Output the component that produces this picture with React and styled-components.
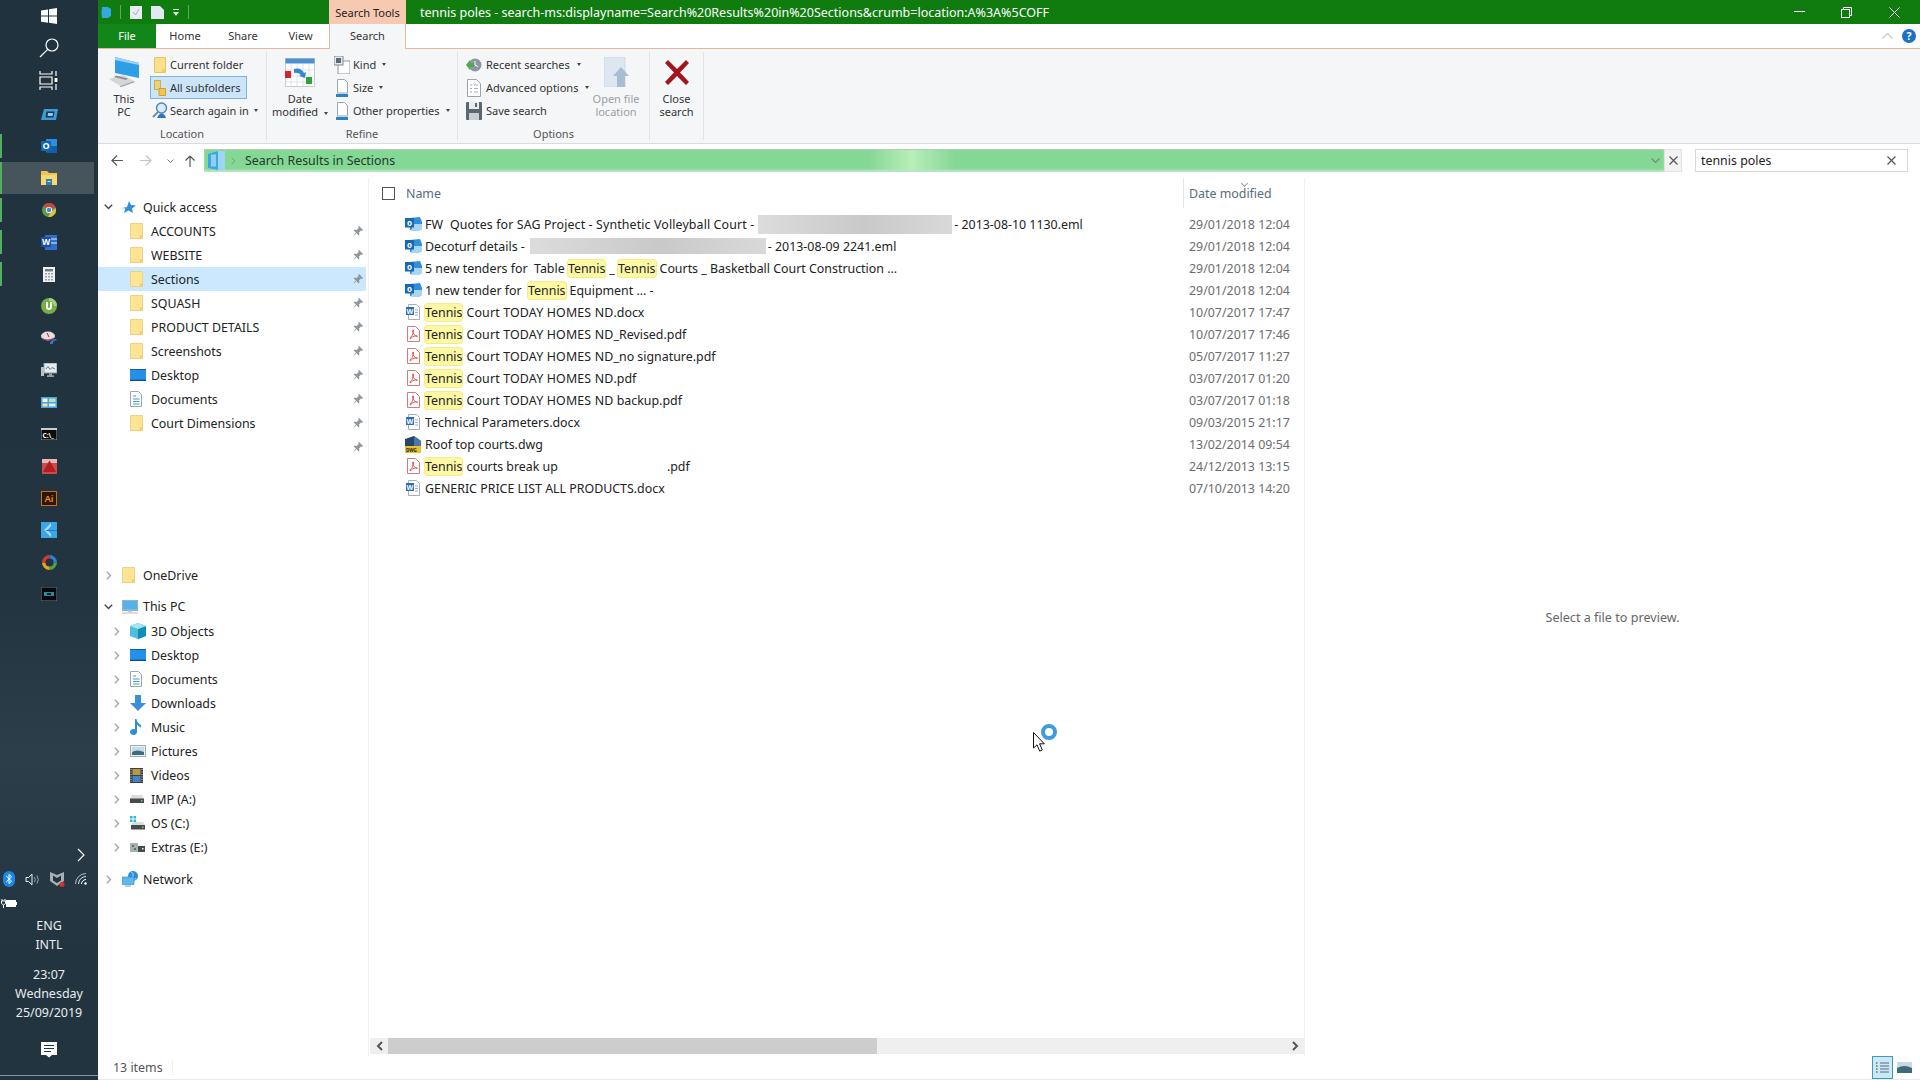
import React from "react";
import styled, { createGlobalStyle } from "styled-components";

const GlobalStyle = createGlobalStyle`
  html, body {
    margin: 0;
    padding: 0;
    background: #fff;
  }
  body {
    font-family: "Noto Sans", "Open Sans", sans-serif;
    font-size: 12.4px;
    color: #222;
    overflow: hidden;
  }
  * {
    box-sizing: border-box;
  }
`;

const glyphs = {
  win: [16, 16, <path fill="#fff" d="M0 2.400 7 1.400V7.600H0zM8 1.300 16 0V7.600H8zM0 8.600H7V14.700L0 13.700zM8 8.600H16V16L8 14.800z" />],
  search: [20, 20, <g fill="none" stroke="#fff" strokeWidth="1.200"><circle cx="13" cy="7" r="6" /><path d="M8.700 11.300 1 19" /></g>],
  taskview: [20, 19, <g fill="none" stroke="#fff" strokeWidth="1.200"><path d="M1 0v3h12V0M1 6h12v7H1zM1 19v-3h12v3" /><path d="M17 0v5M17 13v6" /><rect x="15.600" y="7" width="2.800" height="4" fill="#fff" stroke="none" /></g>],
  ticket: [17, 11, <g><path d="M3 0h14l-2 11H0z" fill="#3d9bd6" /><path d="M5.500 2.500h8l-1 6h-8z" fill="#16394f" /><path d="M7 4h5l-.4 3h-5z" fill="#8fcdf0" /></g>],
  outlook: [16, 16, <g><path d="M5 1h11v13H5z" fill="#2a8fdc" /><path d="M9 8h7v7H5z" fill="#0f5ea8" /><rect x="0" y="3" width="10" height="10" fill="#0f67b5" /><text x="5" y="11.200" fontSize="9" fontWeight="700" fill="#fff" textAnchor="middle">O</text></g>],
  explorer: [16, 16, <g><path d="M0 1h6l2 2h8v12H0z" fill="#f3c34f" /><path d="M0 5h16v10H0z" fill="#fbd76f" /><path d="M5 9h6v6H5z" fill="#2f7eb4" /><path d="M6.500 11h3v1h-3z" fill="#cfe6f5" /></g>],
  chrome: [14, 14, <g><circle cx="7" cy="7" r="7" fill="#5b9b4a" /><path d="M1 3.400A7 7 0 0 1 13.700 5H7z" fill="#c9463d" /><path d="M13.700 5A7 7 0 0 1 6 14l3-5z" fill="#e5bd41" /><circle cx="7" cy="7" r="3.100" fill="#fff" /><circle cx="7" cy="7" r="2.300" fill="#4a83d8" /></g>],
  word: [16, 15, <g><path d="M4 0h12v15H4z" fill="#2f6fc5" /><path d="M9 3h7v2H9zM9 7h7v2H9z" fill="#7fb0e6" /><rect y="2" width="10" height="10" fill="#1d4f9f" /><text x="5" y="10" fontSize="8.500" fontWeight="700" fill="#fff" textAnchor="middle">W</text></g>],
  calc: [12, 15, <g><rect width="12" height="15" fill="#eef0f1" /><rect x="2" y="2" width="8" height="2.400" fill="#6f7a80" /><path d="M2 6h2v1.500H2zM5 6h2v1.500H5zM8 6h2v1.500H8zM2 9h2v1.500H2zM5 9h2v1.500H5zM8 9h2v1.500H8zM2 12h2v1.500H2zM5 12h2v1.500H5zM8 12h2v1.500H8z" fill="#9aa3a8" /></g>],
  torrent: [16, 16, <g><circle cx="8" cy="8" r="8" fill="#76ad45" /><path d="M8 0a8 8 0 0 1 8 8h-3a5 5 0 0 0-5-5z" fill="#a8cf7d" /><path d="M5 4v5a3 3 0 0 0 6 0V4H9v5a1 1 0 0 1-2 0V4z" fill="#fff" /></g>],
  dish: [16, 14, <g><ellipse cx="7" cy="5" rx="7" ry="4.400" fill="#e6dfdf" /><path d="M1 6.500C4 9 9 9 13 6.500L12 8.500C8 10.500 4 10 1 6.500z" fill="#b8394b" /><path d="M6 2 8 6" stroke="#8c2b3a" /><path d="M9 11q3-3 6-3l1 1q-3 1-4 2v2h-3z" fill="#2a7fc4" /></g>],
  monitor: [16, 14, <g><rect x="3" y="0" width="13" height="10" fill="#e5ebee" stroke="#8b9aa3" /><path d="M5 6 7 3.500 9 6.500 11 4.500 14 6" fill="none" stroke="#5f7f95" /><rect x="8" y="10.500" width="3" height="2" fill="#9aa6ad" /><rect x="6" y="12.500" width="7" height="1.200" fill="#c7ced2" /><rect x="0" y="4" width="3" height="9" fill="#b9c1c6" /></g>],
  panel: [16, 11, <g><rect width="16" height="11" fill="#4aa3d8" /><rect x="1.500" y="1.500" width="5" height="3.500" fill="#e9f4fb" /><rect x="8" y="1.500" width="6.500" height="3.500" fill="#bfe0b5" /><rect x="1.500" y="6.500" width="5" height="3" fill="#f1e3a0" /><rect x="8" y="6.500" width="6.500" height="3" fill="#dcecf7" /></g>],
  cmd: [16, 12, <g><rect width="16" height="12" fill="#0c0c0c" stroke="#9aa0a4" /><rect width="16" height="2" fill="#c9cdd0" /><text x="1.600" y="9.600" fontSize="6.500" fontWeight="700" fill="#fff">C:\_</text></g>],
  autocad: [15, 15, <g><rect width="15" height="15" fill="#e7b7b7" /><rect y="4" width="15" height="11" fill="#c94b4b" /><path d="M7.500 1.500 14 13H1z" fill="#b51c22" /></g>],
  ai: [16, 15, <g><rect x=".5" y=".5" width="15" height="14" fill="#2b1703" stroke="#c9701e" /><text x="8" y="11.400" fontSize="9.500" fontWeight="600" fill="#f08a24" textAnchor="middle">Ai</text></g>],
  sketch: [16, 16, <g><rect width="16" height="16" fill="#3aa6e6" /><path d="M10 1 3 8l7 7V12L6.500 8 10 4z" fill="#a6dcf7" /><path d="M5 8h11v1H5z" fill="#1d7fc2" /></g>],
  ring: [15, 15, <g fill="none" strokeWidth="3.400"><path d="M7.500 1.700A5.800 5.800 0 0 1 13.300 7.500" stroke="#2f7fd8" /><path d="M13.300 7.500A5.800 5.800 0 0 1 7.500 13.300" stroke="#4ca63f" /><path d="M7.500 13.300A5.800 5.800 0 0 1 1.700 7.500" stroke="#e9a625" /><path d="M1.700 7.500A5.800 5.800 0 0 1 7.500 1.700" stroke="#d93a2b" /></g>],
  screen: [16, 14, <g><rect width="16" height="14" fill="#05090c" stroke="#7a8287" /><rect x="3" y="5" width="10" height="4" fill="#1f8da0" /><rect x="6" y="6" width="4" height="2" fill="#05090c" /></g>],
  chevronTray: [8, 14, <path d="M1 1 7 7 1 13" fill="none" stroke="#fff" strokeWidth="1.200" />],
  bluetooth: [12, 16, <g><rect width="12" height="16" rx="6" fill="#1b86ea" /><path d="M3.200 5 8.600 10.200 6 12.600V3.400L8.600 5.800 3.200 11" fill="none" stroke="#fff" /></g>],
  speaker: [16, 13, <g fill="none" stroke="#eef1f2"><path d="M1 4.500h2.500L7 1.200v10.600L3.500 8.500H1z" /><path d="M9.500 4q1.500 2.500 0 5M12 2.500q2.500 4 0 8" stroke="#9aa5ab" /></g>],
  mcafee: [15, 15, <g><path d="M0 0 7 3l7-3v9l-7 5-7-5z" fill="#a9b0b4" /><path d="M3 3.500v5L7 11l4-2.500v-5L7 6z" fill="#22343f" /><circle cx="12" cy="12.500" r="2.500" fill="#d8302c" /></g>],
  wifi: [13, 12, <g fill="none" stroke="#b7c0c5"><path d="M.5 11A10.500 10.500 0 0 1 11 .5" /><path d="M3.500 11A7.500 7.500 0 0 1 11 3.500" stroke="#dfe4e6" /><path d="M6.500 11A4.500 4.500 0 0 1 11 6.500" stroke="#fff" /><circle cx="10.500" cy="10.500" r="1.200" fill="#fff" stroke="none" /></g>],
  battery: [16, 9, <g><rect x="5" y="1" width="10" height="7" fill="#fff" /><rect x="15" y="3" width="1" height="3" fill="#fff" /><path d="M1 0v2M4 0v2" stroke="#fff" /><path d="M.5 2h4v2.500l-2 1.500-2-1.500z" fill="none" stroke="#fff" /><path d="M2.500 6v3" stroke="#fff" /></g>],
  chat: [16, 16, <g><path d="M0 0h16v13h-5l-3 2.500L5 13H0z" fill="#fff" /><path d="M3 3.500h10M3 6.500h10M3 9.500h7" stroke="#22343f" /></g>],
  qatCube: [10, 12, <path d="M1 1h6l3 2v7l-3 2H1q-1-5 0-11z" fill="#35a8e0" />],
  qatDoc: [12, 13, <g><path d="M0 0h12v13H0z" fill="#e8edf2" /><path d="M3 6l2.500 3L9 3" stroke="#9db4c6" fill="none" /></g>],
  qatPage: [13, 13, <path d="M0 0h9l4 4v9H0z" fill="#e2e9f1" />],
  qatDrop: [6, 7, <g fill="#d9e8d9"><rect y="0" width="6" height="1" /><path d="M0 3h6L3 7z" /></g>],
  minimize: [11, 2, <rect width="11" height="1" fill="#fff" />],
  restore: [11, 11, <g fill="none" stroke="#fff"><rect x=".5" y="2.500" width="8" height="8" /><path d="M2.500 2.500V.5h8v8h-2" /></g>],
  close: [11, 11, <path d="M.5.5l10 10M10.500.5l-10 10" stroke="#fff" fill="none" />],
  collapse: [11, 6, <path d="M.5 5.500 5.500.5l5 5" fill="none" stroke="#c9c9c9" strokeWidth="1.300" />],
  help: [14, 14, <g><circle cx="7" cy="7" r="7" fill="#1a72c4" /><text x="7" y="11" fontSize="10.500" fontWeight="700" fill="#fff" textAnchor="middle">?</text></g>],
  bigPc: [30, 30, <g><path d="M6 0l24 6v15L6 16z" fill="#2e9fe6" /><path d="M6 0l24 6v2L6 3z" fill="#9ad3f6" /><path d="M0 22l14-4 11 6-14 5z" fill="#d4d6d8" /><path d="M11 29l14-5v1.500L11 30.500z" fill="#a4a7aa" /><path d="M5 20l12 3 2-1.500-12-3z" fill="#8e9194" /></g>],
  smallFolder: [12, 16, <g><path d="M.5.5h11v15H.5z" fill="#ffe08a" stroke="#e4c565" /><path d="M8 12h3.500v3.500H8z" fill="#f1cd62" /></g>],
  subFolders: [12, 16, <g><path d="M.5.5h6v9h-6z" fill="#e9d37a" stroke="#c9ad4e" /><path d="M5 8.500h6.500v7H5z" fill="#f1c64a" stroke="#cda132" /></g>],
  searchAgain: [16, 17, <g><circle cx="9.500" cy="6" r="5" fill="#d9ebf8" stroke="#4a87c2" strokeWidth="1.400" /><path d="M6 10 1 15" stroke="#7a8a96" strokeWidth="2" /><path d="M5 16q2-5 5-4.500t4 4.500z" fill="#2b78c4" /></g>],
  calendar: [30, 29, <g><rect x=".5" y=".5" width="29" height="28" fill="#fff" stroke="#c6ccd2" /><rect x=".5" y=".5" width="29" height="5" fill="#4d90cf" /><path d="M6 6v22M12 6v22M18 6v22M24 6v22M1 12h28M1 18h28M1 24h28" stroke="#dfe4e8" /><rect x="0" y="13" width="6" height="7" fill="#d6242b" /><rect x="21" y="19" width="6" height="7" fill="#2ca33a" /><path d="M9 11q7-2 10 4l2-1-1 6-6-2 2-1q-3-3-7-2z" fill="#3188cf" /></g>],
  kind: [16, 18, <g><rect x="4" y="5" width="12" height="13" fill="#fff" stroke="#8c98a3" /><rect x="0" y="0" width="9" height="9" fill="#e6eaee" stroke="#7f8a94" /><rect x="2" y="2" width="5" height="5" fill="#5b6a76" /></g>],
  size: [12, 18, <g><path d="M1.500.5h7l3 3V14h-10z" fill="#fff" stroke="#9aa6b0" /><rect x="0" y="15" width="12" height="3" fill="#2d82c4" /></g>],
  recent: [16, 14, <g><circle cx="9" cy="7" r="6.500" fill="#8f979c" /><path d="M9 3v4l3 1.500" stroke="#fff" fill="none" /><path d="M0 7l4-5v3h4v4H4v3z" fill="#4eaa4f" /></g>],
  advanced: [14, 18, <g><path d="M.5.5h9l4 4v13H.5z" fill="#fff" stroke="#9aa3aa" /><path d="M3 6h2M7 6h4M3 9.500h2M7 9.500h4M3 13h2M7 13h4" stroke="#a5adb3" /></g>],
  save: [16, 18, <g><rect width="16" height="18" rx="1" fill="#5a6670" /><rect x="3" y="0" width="10" height="7" fill="#e8ecef" /><rect x="3" y="11" width="10" height="7" fill="#c9ced2" /><rect x="9" y="1" width="2" height="4" fill="#5a6670" /></g>],
  openFile: [25, 30, <g><rect width="21" height="30" fill="#dde7f2" stroke="#cbd8e6" /><path d="M17 10l8 9h-4v11h-8V19H9z" fill="#a9bdd2" /></g>],
  closeX: [24, 25, <path d="M3 0l9 9 9-9 3 3-9 9.500 9 9.500-3 3-9-9-9 9-3-3 9-9.500L0 3z" fill="#a3141c" />],
  back: [12, 11, <path d="M6 .5 1 5.500l5 5M1 5.500h11" fill="none" stroke="#555" strokeWidth="1.200" />],
  forward: [12, 11, <path d="M6 .5l5 5-5 5M11 5.500H0" fill="none" stroke="#c4c4c4" strokeWidth="1.200" />],
  recentDrop: [7, 4, <path d="M.5.5 3.500 3.500 6.500.5" fill="none" stroke="#777" />],
  up: [10, 12, <path d="M5 12V1M.5 5.500 5 1l4.500 4.500" fill="none" stroke="#555" strokeWidth="1.200" />],
  crumb: [17, 19, <g><path d="M0 3l10-3v19L0 17z" fill="#3aa7e6" /><path d="M10 0h7v19h-7z" fill="#9fd4f4" /><path d="M3 3.500h5v12H3z" fill="#cbe9fa" opacity=".6" /></g>],
  crumbArrow: [5, 8, <path d="M.5.5 4 4 .5 7.500" fill="none" stroke="#7f9d87" />],
  dropDown: [9, 5, <path d="M.5.5 4.500 4.500 8.500.5" fill="none" stroke="#6f8f76" strokeWidth="1.200" />],
  clearX: [9, 9, <path d="M.5.5l8 8M8.500.5l-8 8" stroke="#555" strokeWidth="1.200" fill="none" />],
  treeOpen: [9, 6, <path d="M.8.8 4.500 4.500 8.200.8" fill="none" stroke="#444" strokeWidth="1.400" />],
  treeClosed: [6, 9, <path d="M.8.8 4.500 4.500.8 8.200" fill="none" stroke="#a6a6a6" strokeWidth="1.400" />],
  star: [14, 12, <path d="M7 0l2 4 5 .5-4 3 1 4.500-4.500-2.500L2 12l1.500-4.500L0 7l5-1z" fill="#2c8fe0" />],
  folder: [13, 16, <g><path d="M.5.5h12v15H.5z" fill="#ffe493" stroke="#ecd384" /><path d="M10 12.500h2.500v3H10z" fill="#efcd68" /></g>],
  desktop: [16, 12, <g><rect width="16" height="12" fill="#2590ea" /><rect width="16" height="1" fill="#0f5fa8" /><rect y="10.700" width="16" height="1.300" fill="#0f4d8c" /></g>],
  documents: [12, 16, <g><path d="M.5.5h8l3 3v12H.5z" fill="#fff" stroke="#9ea6ad" /><path d="M3 5h3M3 8h6.500M3 10.500h6.500M3 13h6.500" stroke="#3f9bd0" /></g>],
  pin: [10, 10, <path d="M6 0l4 4-1 1-1-.5-2 2 .5 2-1 1L3.500 7 1 9.500.5 9 3 6.500.7 4.500l1-1 2 .5 2-2L5 1z" fill="#8f979c" />],
  pc: [16, 14, <g><rect width="16" height="10.500" fill="#8ccbf2" stroke="#6b8ca3" strokeWidth=".6" /><rect x="1" y="1" width="14" height="8.500" fill="#58b0e8" /><rect x="0" y="12.500" width="16" height="1" fill="#b5bcc2" /><rect x="6" y="10.500" width="4" height="2" fill="#c7ccd0" /></g>],
  cube: [16, 16, <g><path d="M8 0l8 3v10l-8 3-8-3V3z" fill="#4dbde0" /><path d="M8 6v10l8-3V3z" fill="#0e8fb5" /><path d="M8 0l8 3-8 3-8-3z" fill="#a6e2f0" /></g>],
  downloads: [16, 16, <path d="M5 0h6v8h5l-8 8-8-8h5z" fill="#3b8fd9" />],
  music: [11, 16, <path d="M5 0h1.500q.5 4 4.500 6v2.500Q8 7 7 5.500V13a3.500 3 0 1 1-2-2.700z" fill="#2a8fd6" />],
  pictures: [16, 12, <g><rect x=".5" y=".5" width="15" height="11" fill="#eef2f5" stroke="#a2abb2" /><rect x="2" y="2" width="12" height="8" fill="#c4dbe9" /><path d="M2 7q5-3 12 0v3H2z" fill="#3e6e7c" /></g>],
  videos: [13, 15, <g><rect width="13" height="15" fill="#3d3f42" /><rect x="2.500" y="1" width="8" height="6" fill="#b59a43" /><rect x="2.500" y="8" width="8" height="6" fill="#3f86c2" /><path d="M1 1v13M12 1v13" stroke="#d8d8d8" strokeDasharray="1 1.500" /></g>],
  drive: [14, 8, <g><path d="M2 0h10l2 4H0z" fill="#dadcdd" /><rect y="3.500" width="14" height="4.500" fill="#474b4e" /><rect x="11" y="5" width="1.500" height="1.500" fill="#5be05b" /></g>],
  driveOs: [15, 14, <g><path d="M0 0h2.500v2.500H0zM3.500 0H6v2.500H3.500zM0 3.500h2.500V6H0zM3.500 3.500H6V6H3.500z" fill="#31b3d8" /><path d="M3 6h10l2 3.500H1z" fill="#dadcdd" /><rect x="1" y="9" width="14" height="4.500" fill="#474b4e" /><rect x="12" y="10.500" width="1.500" height="1.500" fill="#5be05b" /></g>],
  driveExtra: [15, 9, <g><path d="M0 0h8v9H0z" fill="#a9b2a8" /><path d="M2 2h2v2H2zM4 5h2v2H4z" fill="#4d7d5a" /><rect x="8" y="3" width="7" height="6" fill="#474b4e" /><rect x="12" y="5" width="1.500" height="1.500" fill="#e8e8e8" /></g>],
  network: [16, 16, <g><circle cx="11" cy="5" r="5" fill="#2e8fd6" /><path d="M9 1q3 1 2 4t3 3" stroke="#a8d8f2" fill="none" /><rect x="0" y="6" width="12" height="7.500" fill="#5db8ee" stroke="#2e86c4" strokeWidth=".6" /><rect x="3" y="14.500" width="6" height="1" fill="#7aa3bf" /></g>],
  fileOutlook: [17, 15, <g><path d="M5 1l10-1 2 5v7l-4 2-8-1z" fill="#2e90dc" /><path d="M8 7h9v5l-4 2H6z" fill="#a9d5f2" /><rect y="1" width="9" height="9.500" fill="#1667b4" /><text x="4.500" y="8.800" fontSize="8" fontWeight="700" fill="#fff" textAnchor="middle">o</text></g>],
  fileWord: [14, 16, <g><path d="M2.500.5h8l3 3v12h-11z" fill="#fff" stroke="#a5aeb8" /><path d="M9 6h3M9 8.500h3M9 11h3" stroke="#8db4dc" /><rect y="3" width="8" height="8" fill="#2b6bc0" /><text x="4" y="9.500" fontSize="7" fontWeight="700" fill="#fff" textAnchor="middle">W</text></g>],
  filePdf: [13, 16, <g><path d="M.5.5h8l4 4v11H.5z" fill="#fff" stroke="#d87878" /><path d="M3 12q3-2 3.500-7 .2-1.500-.7-1-.8 1 1 4 2 2.500 3.500 2.500 1-.5-1-.8-4 .3-6 3.300z" fill="none" stroke="#d13a3a" strokeWidth=".8" /></g>],
  fileDwg: [16, 17, <g><path d="M0 10 0 3 9 0l7 5v5z" fill="#26456b" /><path d="M9 0l7 5v5H9z" fill="#4878a8" /><rect y="10" width="16" height="7" fill="#e9c22e" /><text x="1" y="15.600" fontSize="4.500" fontWeight="700" fill="#222">DWG</text></g>],
  pointer: [12, 20, <path d="M.5.5V16l3.500-3.200 2.700 6.300 2.600-1.100-2.700-6.200h4.700z" fill="#fff" stroke="#111" />],
  listView: [15, 15, <g stroke="#5a6a74" fill="none"><path d="M5 3h9M5 6h9M5 9h9M5 12h9" /><path d="M1 3h1.500M1 6h1.500M1 9h1.500M1 12h1.500" stroke="#333" /></g>],
  largeView: [15, 11, <g><rect width="15" height="11" fill="#c7d9e6" /><path d="M0 6q7-4 15 0v5H0z" fill="#3d6b78" /></g>],
  scrollLeft: [7, 10, <path d="M6 1 2 5l4 4" fill="none" stroke="#555" strokeWidth="2" />],
  scrollRight: [7, 10, <path d="M1 1l4 4-4 4" fill="none" stroke="#555" strokeWidth="2" />],
};

const SvgIcon = styled.svg`
  display: block;
  flex: none;
`;

function Icon({ name }) {
  const [w, h, art] = glyphs[name];
  return (
    <SvgIcon width={w} height={h} viewBox={`0 0 ${w} ${h}`}>
      {art}
    </SvgIcon>
  );
}

const Page = styled.div`
  display: flex;
  width: 1920px;
  height: 1080px;
  overflow: hidden;
  position: relative;
`;

/* taskbar */
const Taskbar = styled.aside`
  width: 98px;
  flex: none;
  display: flex;
  flex-direction: column;
  color: #e8ecee;
  background: linear-gradient(#20323d 0%, #22343f 55%, #2c3e49 70%, #22343f 88%);
`;

const TaskTop = styled.div`
  display: flex;
  flex-direction: column;
  margin-bottom: 2px;
`;

const TaskSlot = styled.div`
  position: relative;
  height: 32px;
  margin-right: 4px;
  display: flex;
  align-items: center;
  justify-content: center;
  padding-left: 4px;
  background: ${(p) => (p.$active ? "#46545c" : "transparent")};

  &::before {
    content: "";
    position: absolute;
    left: 0;
    top: ${(p) => (p.$active ? "0" : "4px")};
    bottom: ${(p) => (p.$active ? "0" : "4px")};
    width: 2px;
    background: ${(p) => (p.$running ? "#55ad5f" : "transparent")};
  }
`;

const Tray = styled.div`
  margin-top: auto;
  display: flex;
  flex-direction: column;
  font-size: 12.500px;
  line-height: 19px;
  text-align: center;
`;

const TrayChevron = styled.div`
  display: flex;
  justify-content: flex-end;
  padding-right: 13px;
  height: 24px;
  align-items: center;
`;

const TrayIcons = styled.div`
  display: flex;
  align-items: center;
  justify-content: space-between;
  height: 24px;
  padding: 0 10px 0 3px;
`;

const TrayBattery = styled.div`
  height: 24px;
  padding-left: 1px;
  display: flex;
  align-items: center;
`;

const TrayLines = styled.div`
  margin-top: ${(p) => p.$top}px;
`;

const ActionCenter = styled.div`
  height: 28px;
  margin-top: 14px;
  display: flex;
  justify-content: center;
  align-items: center;
`;

const TaskFoot = styled.div`
  height: 5px;
  margin-top: 11px;
  border-top: 1px solid #8b969c;
`;

/* window */
const Win = styled.main`
  flex: 1;
  min-width: 0;
  display: flex;
  flex-direction: column;
`;

const TitleBar = styled.header`
  height: 24px;
  display: flex;
  align-items: center;
  background: #107c10;
  color: #fff;
`;

const Qat = styled.div`
  width: 231px;
  flex: none;
  display: flex;
  align-items: center;
  gap: 9px;
  padding-left: 3px;
`;

const QatBar = styled.span`
  width: 1px;
  height: 14px;
  background: #5fa65f;
`;

const ContextTab = styled.div`
  width: 77px;
  height: 24px;
  flex: none;
  background: #f8c9b1;
  color: #222;
  font-size: 11px;
  display: flex;
  align-items: center;
  justify-content: center;
`;

const TitleText = styled.div`
  padding-left: 14px;
  font-size: 12.500px;
  white-space: nowrap;
`;

const WinButtons = styled.div`
  margin-left: auto;
  padding-right: 2px;
  display: flex;
`;

const WinButton = styled.div`
  width: 47.500px;
  height: 24px;
  display: flex;
  align-items: center;
  justify-content: center;
`;

const TabRow = styled.nav`
  height: 25px;
  display: flex;
  align-items: stretch;
  background: #fff;
  border-bottom: 1px solid #e8b49a;
`;

const Tab = styled.div`
  width: ${(p) => p.$w}px;
  display: flex;
  align-items: center;
  justify-content: center;
  padding-bottom: 1px;
  font-size: 11px;
  color: ${(p) => (p.$file ? "#fff" : "#333")};
  background: ${(p) => (p.$file ? "#13861a" : "transparent")};
`;

const ActiveTab = styled(Tab)`
  height: 25px;
  padding-bottom: 2px;
  background: #f5f6f7;
  border-left: 1px solid #e8b49a;
  border-right: 1px solid #e8b49a;
`;

const TabEnd = styled.div`
  margin-left: auto;
  display: flex;
  align-items: center;
  gap: 9px;
  padding-right: 4px;
`;

const Ribbon = styled.section`
  height: 95px;
  display: flex;
  background: #f5f6f7;
  border-bottom: 1px solid #dadbdc;
  font-size: 11px;
  color: #333;
`;

const Group = styled.div`
  width: ${(p) => p.$w}px;
  flex: none;
  margin: 3px 0;
  border-right: 1px solid #e2e3e4;
  display: flex;
  flex-direction: column;
`;

const GroupBody = styled.div`
  height: 73px;
  flex: none;
  display: flex;
  padding-top: 1px;
`;

const GroupLabel = styled.div`
  flex: none;
  text-align: center;
  color: #555;
  line-height: 18px;
  height: 18px;
`;

const BigButton = styled.div`
  width: ${(p) => p.$w}px;
  flex: none;
  display: flex;
  flex-direction: column;
  align-items: center;
  text-align: center;
  line-height: 13px;
  color: ${(p) => (p.$disabled ? "#9aa0a6" : "#333")};
`;

const BigIcon = styled.div`
  height: 38px;
  margin-bottom: 1px;
  display: flex;
  align-items: center;
  justify-content: center;
`;

const SmallCol = styled.div`
  width: ${(p) => p.$w}px;
  flex: none;
  display: flex;
  flex-direction: column;
  padding-left: ${(p) => p.$pad || 0}px;
`;

const SmallItem = styled.div`
  height: 23px;
  width: fit-content;
  display: flex;
  align-items: center;
  gap: ${(p) => p.$gap || 3}px;
  padding: 0 6px 0 ${(p) => p.$left || 0}px;
  white-space: nowrap;
  border: 1px solid ${(p) => (p.$on ? "#7db3dc" : "transparent")};
  background: ${(p) => (p.$on ? "#cce4f7" : "transparent")};
`;

const SmallIconBox = styled.span`
  width: 16px;
  display: flex;
  justify-content: center;
  flex: none;
`;

const Caret = styled.span`
  width: 0;
  height: 0;
  margin-left: 3px;
  border-left: 2.500px solid transparent;
  border-right: 2.500px solid transparent;
  border-top: 3px solid #444;
`;

const InlineCaret = styled(Caret)`
  display: inline-block;
  vertical-align: middle;
`;

/* address */
const AddressRow = styled.div`
  height: 34px;
  padding-top: 5px;
  display: flex;
`;

const NavArrows = styled.div`
  width: 106px;
  height: 23px;
  flex: none;
  display: flex;
  align-items: center;
  padding-left: 13px;
`;

const ArrowBox = styled.span`
  width: ${(p) => p.$w}px;
  margin-left: ${(p) => p.$ml || 0}px;
  display: flex;
  justify-content: center;
`;

const AddressBar = styled.div`
  width: 1460px;
  height: 23px;
  flex: none;
  display: flex;
  align-items: center;
  padding: 0 4px 0 4px;
  gap: 6px;
  color: #1f3a26;
  box-shadow: inset 0 1px 0 #b4ccb9, inset 0 -2px 2px #b9e6c4;
  background: linear-gradient(
    90deg,
    #85d796 0%,
    #85d796 45.500%,
    #9fe3a9 47%,
    #b8efb8 48.500%,
    #a6e6ae 49.500%,
    #85d796 51.500%,
    #85d796 100%
  );
`;

const AddressText = styled.span`
  margin-left: 3px;
`;

const AddressClear = styled.div`
  width: 18px;
  height: 23px;
  flex: none;
  display: flex;
  align-items: center;
  justify-content: center;
  background: #f2f2f2;
  border: 1px solid #e2e2e2;
`;

const SearchBox = styled.div`
  width: 213px;
  height: 23px;
  flex: none;
  margin-left: 13px;
  display: flex;
  align-items: center;
  justify-content: space-between;
  padding: 0 11px 0 5px;
  border: 1px solid #d9d9d9;
  color: #222;
`;

/* main panes */
const Panes = styled.div`
  flex: 1;
  min-height: 0;
  display: flex;
`;

const NavPane = styled.div`
  width: 271px;
  flex: none;
  border-right: 1px solid #f1f1f1;
  padding-top: 17px;
  display: flex;
  flex-direction: column;
`;

const NavGroup = styled.div`
  width: 268px;
  margin-top: ${(p) => p.$top || 0}px;
`;

const NavRow = styled.div`
  height: ${(p) => p.$h || 24}px;
  display: flex;
  align-items: center;
  padding-left: ${(p) => (p.$depth || 0) * 8}px;
  padding-right: 2px;
  background: ${(p) => (p.$selected ? "#cce8ff" : "transparent")};
`;

const Twisty = styled.span`
  width: 24px;
  flex: none;
  display: flex;
  justify-content: center;
  padding-right: 3px;
`;

const NavIcon = styled.span`
  width: 21px;
  height: 16px;
  flex: none;
  display: flex;
  align-items: center;
`;

const PinBox = styled.span`
  margin-left: auto;
  width: 12px;
  display: flex;
  justify-content: center;
`;

const FilePane = styled.div`
  width: 936px;
  flex: none;
  border-right: 1px solid #f1f1f1;
  display: flex;
  flex-direction: column;
  padding-left: 1px;
`;

const HeaderRow = styled.div`
  height: 30px;
  flex: none;
  display: grid;
  grid-template-columns: 813px 1fr;
  color: #5b6b7d;
`;

const NameHead = styled.div`
  display: flex;
  align-items: center;
  gap: 11px;
  padding-left: 12px;
`;

const CheckBox = styled.span`
  width: 13px;
  height: 13px;
  border: 1px solid #555;
`;

const DateHead = styled.div`
  position: relative;
  border-left: 1px solid #e5e5e5;
  padding-left: 5px;
  display: flex;
  align-items: center;
`;

const SortMark = styled.span`
  position: absolute;
  left: 58px;
  top: 3px;
  width: 5px;
  height: 5px;
  border-right: 1px solid #9a9a9a;
  border-bottom: 1px solid #9a9a9a;
  transform: rotate(45deg);
`;

const FileList = styled.div`
  flex: 1;
  min-height: 0;
  padding-top: 5px;
`;

const FileRow = styled.div`
  height: 22px;
  display: grid;
  grid-template-columns: 819px 1fr;
  align-items: center;
`;

const FileName = styled.div`
  display: flex;
  align-items: center;
  padding-left: 34px;
  white-space: pre;
`;

const FileIconBox = styled.span`
  width: 21px;
  flex: none;
  display: flex;
  justify-content: center;
  padding-right: 3px;
`;

const Hit = styled.span`
  background: #fdf8a4;
  border-radius: 3px;
  box-shadow: 0 0 0 1px #f5ec86;
  margin-right: 4px;
`;

const Loose = styled.span`
  letter-spacing: ${(p) => p.$s}px;
`;

const Blur = styled.span`
  display: inline-block;
  width: ${(p) => p.$w}px;
  height: ${(p) => p.$h}px;
  margin: 0 ${(p) => p.$after}px 0 ${(p) => p.$before}px;
  background: linear-gradient(90deg, #dcdcdc, #c9c9c9 55%, #d9d9d9);
`;

const Gap = styled.span`
  display: inline-block;
  width: ${(p) => p.$w}px;
`;

const FileDate = styled.div`
  color: #6d6d6d;
`;

const HScroll = styled.div`
  height: 16px;
  flex: none;
  margin-bottom: 2px;
  display: flex;
  align-items: center;
  background: #efefef;
`;

const ScrollEnd = styled.span`
  width: 18px;
  flex: none;
  display: flex;
  justify-content: center;
`;

const ScrollThumb = styled.span`
  width: 489px;
  height: 16px;
  background: #cdcdcd;
`;

const Fill = styled.span`
  flex: 1;
`;

const Preview = styled.div`
  flex: 1;
  display: flex;
  align-items: center;
  justify-content: center;
  color: #666;
  font-size: 12.600px;
`;

const StatusBar = styled.footer`
  height: 24px;
  flex: none;
  display: flex;
  align-items: stretch;
  border-bottom: 1px solid #e9e9e9;
  color: #555;
`;

const ItemCount = styled.div`
  width: 74px;
  padding-left: 15px;
  display: flex;
  align-items: center;
  white-space: nowrap;
`;

const StatusSep = styled.span`
  width: 1px;
  margin: 4px 0;
  background: #f1f1f1;
`;

const ViewButtons = styled.div`
  margin-left: auto;
  display: flex;
  align-items: center;
  gap: 4px;
  padding-right: 8px;
`;

const ViewButton = styled.span`
  width: 21px;
  height: 23px;
  display: flex;
  align-items: center;
  justify-content: center;
  background: #cbe8f6;
  border: 1px solid #3e9ab8;
`;

const Busy = styled.div`
  position: absolute;
  left: 1033px;
  top: 724px;
  width: 26px;
  height: 28px;
`;

const BusyPointer = styled.div`
  position: absolute;
  left: 0;
  top: 8px;
`;

const BusyRing = styled.div`
  position: absolute;
  left: 8px;
  top: 0;
  width: 16px;
  height: 16px;
  border-radius: 50%;
  border: 4px solid #3d9be0;
  background: #fff;
`;

const taskApps = [
  { icon: "ticket" },
  { icon: "outlook", running: true },
  { icon: "explorer", running: true, active: true },
  { icon: "chrome", running: true },
  { icon: "word", running: true },
  { icon: "calc", running: true },
  { icon: "torrent" },
  { icon: "dish" },
  { icon: "monitor" },
  { icon: "panel" },
  { icon: "cmd" },
  { icon: "autocad" },
  { icon: "ai" },
  { icon: "sketch" },
  { icon: "ring" },
  { icon: "screen" },
];

const quickAccess = [
  ["folder", "ACCOUNTS"],
  ["folder", "WEBSITE"],
  ["folder", "Sections", true],
  ["folder", "SQUASH"],
  ["folder", "PRODUCT DETAILS"],
  ["folder", "Screenshots"],
  ["desktop", "Desktop"],
  ["documents", "Documents"],
  ["folder", "Court Dimensions"],
  [null, ""],
];

const thisPc = [
  ["cube", "3D Objects"],
  ["desktop", "Desktop"],
  ["documents", "Documents"],
  ["downloads", "Downloads"],
  ["music", "Music"],
  ["pictures", "Pictures"],
  ["videos", "Videos"],
  ["drive", "IMP (A:)"],
  ["driveOs", "OS (C:)"],
  ["driveExtra", "Extras (E:)"],
];

const T = () => <Hit>Tennis</Hit>;
const Court = () => <Loose $s={0.16}>Court TODAY HOMES ND</Loose>;

const files = [
  {
    icon: "fileOutlook",
    date: "29/01/2018 12:04",
    name: (
      <>
        <Loose $s={0.12}>FW  Quotes for SAG Project - Synthetic Volleyball Court -</Loose>
        <Blur $w={194} $h={19} $before={4} $after={2} />- 2013-08-10 1130.eml
      </>
    ),
  },
  {
    icon: "fileOutlook",
    date: "29/01/2018 12:04",
    name: (
      <>
        Decoturf details -
        <Blur $w={236} $h={16} $before={5} $after={2} />- 2013-08-09 2241.eml
      </>
    ),
  },
  {
    icon: "fileOutlook",
    date: "29/01/2018 12:04",
    name: (
      <>
        5 new tenders for  Table <T />_ <T />Courts _ Basketball Court Construction ...
      </>
    ),
  },
  {
    icon: "fileOutlook",
    date: "29/01/2018 12:04",
    name: (
      <>
        1 new tender for  <T />Equipment ... -
      </>
    ),
  },
  { icon: "fileWord", date: "10/07/2017 17:47", name: <><T /><Court />.docx</> },
  { icon: "filePdf", date: "10/07/2017 17:46", name: <><T /><Court />_Revised.pdf</> },
  { icon: "filePdf", date: "05/07/2017 11:27", name: <><T /><Court />_no signature.pdf</> },
  { icon: "filePdf", date: "03/07/2017 01:20", name: <><T /><Court />.pdf</> },
  { icon: "filePdf", date: "03/07/2017 01:18", name: <><T /><Court /> backup.pdf</> },
  { icon: "fileWord", date: "09/03/2015 21:17", name: "Technical Parameters.docx" },
  { icon: "fileDwg", date: "13/02/2014 09:54", name: "Roof top courts.dwg" },
  {
    icon: "filePdf",
    date: "24/12/2013 13:15",
    name: (
      <>
        <T />courts break up<Gap $w={109} />.pdf
      </>
    ),
  },
  { icon: "fileWord", date: "07/10/2013 14:20", name: "GENERIC PRICE LIST ALL PRODUCTS.docx" },
];

function Small({ icon, label, caret, on, left, gap }) {
  return (
    <SmallItem $on={on} $left={left} $gap={gap}>
      <SmallIconBox>
        <Icon name={icon} />
      </SmallIconBox>
      {label}
      {caret && <Caret />}
    </SmallItem>
  );
}

function TreeRow({ icon, label, depth, open, closed, pin, selected, h }) {
  return (
    <NavRow $depth={depth} $selected={selected} $h={h}>
      <Twisty>
        {open && <Icon name="treeOpen" />}
        {closed && <Icon name="treeClosed" />}
      </Twisty>
      <NavIcon>{icon && <Icon name={icon} />}</NavIcon>
      {label}
      {pin && (
        <PinBox>
          <Icon name="pin" />
        </PinBox>
      )}
    </NavRow>
  );
}

export default function App() {
  return (
    <Page>
      <GlobalStyle />
      <Taskbar>
        <TaskTop>
          <TaskSlot>
            <Icon name="win" />
          </TaskSlot>
          <TaskSlot>
            <Icon name="search" />
          </TaskSlot>
          <TaskSlot>
            <Icon name="taskview" />
          </TaskSlot>
        </TaskTop>
        {taskApps.map((app) => (
          <TaskSlot key={app.icon} $running={app.running} $active={app.active}>
            <Icon name={app.icon} />
          </TaskSlot>
        ))}
        <Tray>
          <TrayChevron>
            <Icon name="chevronTray" />
          </TrayChevron>
          <TrayIcons>
            <Icon name="bluetooth" />
            <Icon name="speaker" />
            <Icon name="mcafee" />
            <Icon name="wifi" />
          </TrayIcons>
          <TrayBattery>
            <Icon name="battery" />
          </TrayBattery>
          <TrayLines $top={1}>
            <div>ENG</div>
            <div>INTL</div>
          </TrayLines>
          <TrayLines $top={11}>
            <div>23:07</div>
            <div>Wednesday</div>
            <div>25/09/2019</div>
          </TrayLines>
          <ActionCenter>
            <Icon name="chat" />
          </ActionCenter>
          <TaskFoot />
        </Tray>
      </Taskbar>

      <Win>
        <TitleBar>
          <Qat>
            <Icon name="qatCube" />
            <QatBar />
            <Icon name="qatDoc" />
            <Icon name="qatPage" />
            <Icon name="qatDrop" />
            <QatBar />
          </Qat>
          <ContextTab>Search Tools</ContextTab>
          <TitleText>
            tennis poles - search-ms:displayname=Search%20Results%20in%20Sections&amp;crumb=location:A%3A%5COFF
          </TitleText>
          <WinButtons>
            <WinButton>
              <Icon name="minimize" />
            </WinButton>
            <WinButton>
              <Icon name="restore" />
            </WinButton>
            <WinButton>
              <Icon name="close" />
            </WinButton>
          </WinButtons>
        </TitleBar>

        <TabRow>
          <Tab $w={58} $file>
            File
          </Tab>
          <Tab $w={58}>Home</Tab>
          <Tab $w={58}>Share</Tab>
          <Tab $w={57}>View</Tab>
          <ActiveTab $w={77}>Search</ActiveTab>
          <TabEnd>
            <Icon name="collapse" />
            <Icon name="help" />
          </TabEnd>
        </TabRow>

        <Ribbon>
          <Group $w={169}>
            <GroupBody>
              <BigButton $w={52}>
                <BigIcon>
                  <Icon name="bigPc" />
                </BigIcon>
                This
                <br />
                PC
              </BigButton>
              <SmallCol $w={116}>
                <Small icon="smallFolder" label="Current folder" left={1} gap={2} />
                <Small icon="subFolders" label="All subfolders" on left={1} gap={2} />
                <Small icon="searchAgain" label="Search again in" caret left={1} gap={2} />
              </SmallCol>
            </GroupBody>
            <GroupLabel>Location</GroupLabel>
          </Group>

          <Group $w={191}>
            <GroupBody>
              <BigButton $w={66}>
                <BigIcon>
                  <Icon name="calendar" />
                </BigIcon>
                Date
                <br />
                <span>
                  modified <InlineCaret />
                </span>
              </BigButton>
              <SmallCol $w={124}>
                <Small icon="kind" label="Kind" caret gap={3} />
                <Small icon="size" label="Size" caret gap={3} />
                <Small icon="size" label="Other properties" caret gap={3} />
              </SmallCol>
            </GroupBody>
            <GroupLabel>Refine</GroupLabel>
          </Group>

          <Group $w={192}>
            <GroupBody>
              <SmallCol $w={127} $pad={7}>
                <Small icon="recent" label="Recent searches" caret gap={4} />
                <Small icon="advanced" label="Advanced options" caret gap={4} />
                <Small icon="save" label="Save search" gap={4} />
              </SmallCol>
              <BigButton $w={62} $disabled>
                <BigIcon>
                  <Icon name="openFile" />
                </BigIcon>
                Open file
                <br />
                location
              </BigButton>
            </GroupBody>
            <GroupLabel>Options</GroupLabel>
          </Group>

          <Group $w={54}>
            <GroupBody>
              <BigButton $w={53}>
                <BigIcon>
                  <Icon name="closeX" />
                </BigIcon>
                Close
                <br />
                search
              </BigButton>
            </GroupBody>
          </Group>
        </Ribbon>

        <AddressRow>
          <NavArrows>
            <ArrowBox $w={12}>
              <Icon name="back" />
            </ArrowBox>
            <ArrowBox $w={22} $ml={12}>
              <Icon name="forward" />
            </ArrowBox>
            <ArrowBox $w={26}>
              <Icon name="recentDrop" />
            </ArrowBox>
            <ArrowBox $w={13}>
              <Icon name="up" />
            </ArrowBox>
          </NavArrows>
          <AddressBar>
            <Icon name="crumb" />
            <Icon name="crumbArrow" />
            <AddressText>Search Results in Sections</AddressText>
            <Fill />
            <Icon name="dropDown" />
          </AddressBar>
          <AddressClear>
            <Icon name="clearX" />
          </AddressClear>
          <SearchBox>
            tennis poles
            <Icon name="clearX" />
          </SearchBox>
        </AddressRow>

        <Panes>
          <NavPane>
            <NavGroup>
              <TreeRow icon="star" label="Quick access" open />
              {quickAccess.map(([icon, label, selected]) => (
                <TreeRow
                  key={label || "empty"}
                  icon={icon}
                  label={label}
                  depth={1}
                  pin
                  selected={selected}
                />
              ))}
            </NavGroup>
            <NavGroup $top={104}>
              <TreeRow icon="folder" label="OneDrive" closed />
            </NavGroup>
            <NavGroup $top={7}>
              <TreeRow icon="pc" label="This PC" open h={25} />
              {thisPc.map(([icon, label]) => (
                <TreeRow key={label} icon={icon} label={label} depth={1} closed />
              ))}
            </NavGroup>
            <NavGroup $top={8}>
              <TreeRow icon="network" label="Network" closed />
            </NavGroup>
          </NavPane>

          <FilePane>
            <HeaderRow>
              <NameHead>
                <CheckBox />
                Name
              </NameHead>
              <DateHead>
                <SortMark />
                Date modified
              </DateHead>
            </HeaderRow>
            <FileList>
              {files.map((file) => (
                <FileRow key={file.date + file.icon}>
                  <FileName>
                    <FileIconBox>
                      <Icon name={file.icon} />
                    </FileIconBox>
                    {file.name}
                  </FileName>
                  <FileDate>{file.date}</FileDate>
                </FileRow>
              ))}
            </FileList>
            <HScroll>
              <ScrollEnd>
                <Icon name="scrollLeft" />
              </ScrollEnd>
              <ScrollThumb />
              <Fill />
              <ScrollEnd>
                <Icon name="scrollRight" />
              </ScrollEnd>
            </HScroll>
          </FilePane>

          <Preview>Select a file to preview.</Preview>
        </Panes>

        <StatusBar>
          <ItemCount>13 items</ItemCount>
          <StatusSep />
          <ViewButtons>
            <ViewButton>
              <Icon name="listView" />
            </ViewButton>
            <Icon name="largeView" />
          </ViewButtons>
        </StatusBar>
      </Win>

      <Busy>
        <BusyPointer>
          <Icon name="pointer" />
        </BusyPointer>
        <BusyRing />
      </Busy>
    </Page>
  );
}
